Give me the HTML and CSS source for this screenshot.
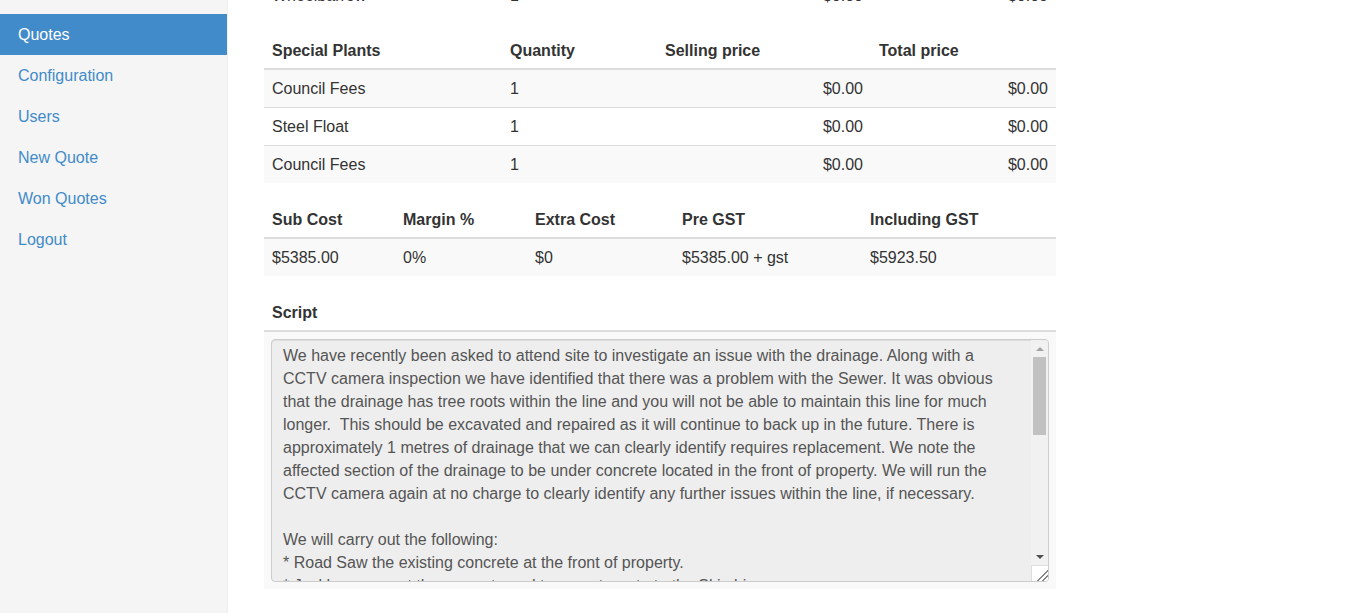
FILE: index.html
```html
<!DOCTYPE html>
<html lang="en">
<head>
<meta charset="utf-8">
<title>Quote</title>
<link rel="stylesheet" href="styles.css">
</head>
<body>
<div class="layout">
  <nav class="sidebar">
    <a class="nav-link active" href="#">Quotes</a>
    <a class="nav-link" href="#">Configuration</a>
    <a class="nav-link" href="#">Users</a>
    <a class="nav-link" href="#">New Quote</a>
    <a class="nav-link" href="#">Won Quotes</a>
    <a class="nav-link" href="#">Logout</a>
  </nav>
  <main class="main">
    <table class="tbl tbl-items tbl-prev">
      <colgroup><col class="c1"><col class="c2"><col class="c3"><col class="c4"></colgroup>
      <tbody>
        <tr class="plain"><td>Wheelbarrow</td><td>1</td><td class="num">$0.00</td><td class="num">$0.00</td></tr>
      </tbody>
    </table>

    <table class="tbl tbl-items">
      <colgroup><col class="c1"><col class="c2"><col class="c3"><col class="c4"></colgroup>
      <thead>
        <tr><th>Special Plants</th><th>Quantity</th><th>Selling price</th><th>Total price</th></tr>
      </thead>
      <tbody>
        <tr><td>Council Fees</td><td>1</td><td class="num">$0.00</td><td class="num">$0.00</td></tr>
        <tr><td>Steel Float</td><td>1</td><td class="num">$0.00</td><td class="num">$0.00</td></tr>
        <tr><td>Council Fees</td><td>1</td><td class="num">$0.00</td><td class="num">$0.00</td></tr>
      </tbody>
    </table>

    <table class="tbl tbl-totals">
      <colgroup><col class="t1"><col class="t2"><col class="t3"><col class="t4"><col class="t5"></colgroup>
      <thead>
        <tr><th>Sub Cost</th><th>Margin %</th><th>Extra Cost</th><th>Pre GST</th><th>Including GST</th></tr>
      </thead>
      <tbody>
        <tr><td>$5385.00</td><td>0%</td><td>$0</td><td>$5385.00 + gst</td><td>$5923.50</td></tr>
      </tbody>
    </table>

    <table class="tbl tbl-script">
      <thead>
        <tr><th>Script</th></tr>
      </thead>
      <tbody>
        <tr><td class="script-cell">
          <div class="script-box">
            <textarea class="script-text" readonly>We have recently been asked to attend site to investigate an issue with the drainage. Along with a CCTV camera inspection we have identified that there was a problem with the Sewer. It was obvious that the drainage has tree roots within the line and you will not be able to maintain this line for much longer.  This should be excavated and repaired as it will continue to back up in the future. There is approximately 1 metres of drainage that we can clearly identify requires replacement. We note the affected section of the drainage to be under concrete located in the front of property. We will run the CCTV camera again at no charge to clearly identify any further issues within the line, if necessary.

We will carry out the following:
* Road Saw the existing concrete at the front of property.
* Jackhammer out the concrete and transport waste to the Skip bin.
* Excavate to expose the damaged section of the drainage.
* Replace approximately 1 metre of drainage with new PVC pipe.
* Backfill and reinstate the concrete.</textarea>
            <div class="vscroll" aria-hidden="true">
              <div class="sb-btn"><span class="arrow-up"></span></div>
              <div class="sb-track"><div class="sb-thumb"></div></div>
              <div class="sb-btn"><span class="arrow-down"></span></div>
              <div class="sb-corner"></div>
            </div>
          </div>
        </td></tr>
      </tbody>
    </table>
  </main>
</div>
</body>
</html>
```

FILE: styles.css
```css
* { box-sizing: border-box; }

html, body {
  margin: 0;
  padding: 0;
  height: 100%;
  overflow: hidden;
  background: #fff;
}

body {
  font-family: "Liberation Sans", Arial, sans-serif;
  font-size: 16px;
  line-height: 21px;
  color: #333;
}

.layout {
  display: flex;
  min-height: 100vh;
}

.sidebar {
  flex: 0 0 228px;
  width: 228px;
  background: #f5f5f5;
  border-right: 1px solid #eee;
  padding-top: 14px;
  display: flex;
  flex-direction: column;
}

.nav-link {
  display: block;
  padding: 10px 18px;
  line-height: 21px;
  color: #428bca;
  text-decoration: none;
}

.nav-link.active {
  background: #428bca;
  color: #fff;
}

.main {
  flex: 0 0 auto;
  padding-left: 36px;
  width: 828px;
}

.tbl {
  width: 792px;
  border-collapse: collapse;
  border-spacing: 0;
  table-layout: fixed;
  margin-bottom: 17px;
}

.tbl-prev {
  margin-top: -24px;
}

.tbl th,
.tbl td {
  padding: 8px 8px;
  line-height: 21px;
  text-align: left;
  vertical-align: top;
  white-space: nowrap;
}

.tbl th {
  padding-top: 9px;
  padding-bottom: 7px;
  font-weight: bold;
  border-bottom: 2px solid #ddd;
}

.tbl td {
  border-top: 1px solid #ddd;
}

.tbl thead + tbody tr:first-child td {
  border-top: 0;
}

.tbl tbody tr:nth-child(odd) td {
  background: #f9f9f9;
}

.tbl tbody tr.plain td {
  background: #fff;
}

.tbl td.num {
  text-align: right;
}

.c1 { width: 238px; }
.c2 { width: 155px; }
.c3 { width: 214px; }
.c4 { width: 185px; }

.t1 { width: 131px; }
.t2 { width: 132px; }
.t3 { width: 147px; }
.t4 { width: 188px; }
.t5 { width: 194px; }

.tbl .script-cell {
  padding: 7px;
  line-height: 0;
}

.script-box {
  display: flex;
  width: 778px;
  height: 243px;
  background: #eee;
  border: 1px solid #ccc;
  border-radius: 4px;
  box-shadow: inset 0 1px 1px rgba(0, 0, 0, 0.075);
  overflow: hidden;
}

.script-text {
  flex: 1 1 auto;
  min-width: 0;
  height: 100%;
  margin: 0;
  padding: 4px 23px 4px 11px;
  font-family: "Liberation Sans", Arial, sans-serif;
  font-size: 16px;
  line-height: 23px;
  color: #555;
  background: transparent;
  border: 0;
  resize: none;
  overflow: hidden;
  outline: none;
}

.vscroll {
  flex: 0 0 17px;
  width: 17px;
  display: flex;
  flex-direction: column;
  background: #f1f1f1;
}

.sb-btn {
  flex: 0 0 17px;
  display: flex;
  align-items: center;
  justify-content: center;
}

.arrow-up,
.arrow-down {
  display: block;
  width: 0;
  height: 0;
  border-left: 4px solid transparent;
  border-right: 4px solid transparent;
}

.arrow-up {
  border-bottom: 4px solid #a3a3a3;
}

.arrow-down {
  border-top: 4px solid #505050;
}

.sb-track {
  flex: 1 1 auto;
  padding: 0 2px;
}

.sb-thumb {
  height: 78px;
  background: #c1c1c1;
}

.sb-corner {
  flex: 0 0 16px;
  background:
    linear-gradient(135deg, transparent 0 64%, #888 64% 69%, transparent 69% 80%, #888 80% 85%, transparent 85%) no-repeat,
    #fff;
  border-left: 1px solid #ddd;
  border-top: 1px solid #ddd;
}
```
